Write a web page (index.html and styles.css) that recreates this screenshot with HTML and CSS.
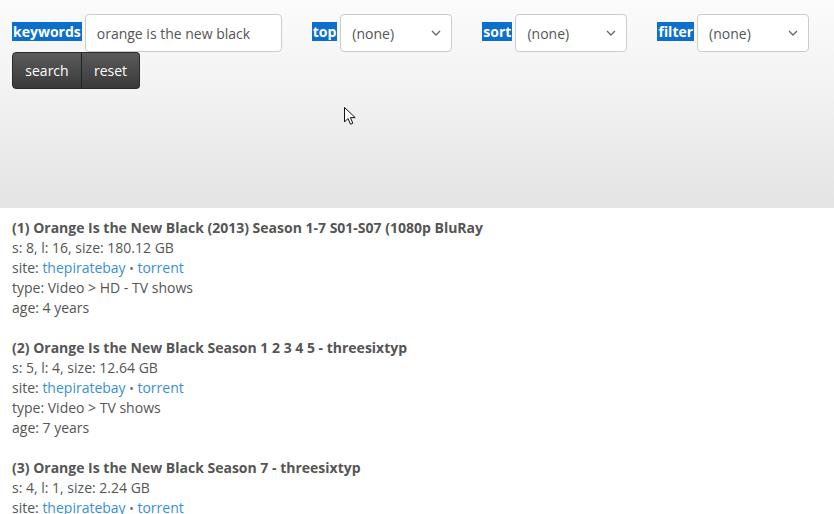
FILE: index.html
```html
<!DOCTYPE html>
<html lang="en">
<head>
<meta charset="utf-8">
<title>search</title>
<link rel="stylesheet" href="styles.css">
</head>
<body>
<form class="search-bar">
  <div class="fields">
    <div class="field">
      <label class="field-label" for="kw">keywords</label>
      <input class="text-input" id="kw" type="text" value="orange is the new black">
    </div>
    <div class="field">
      <label class="field-label" for="top">top</label>
      <select class="select" id="top"><option>(none)</option></select>
    </div>
    <div class="field">
      <label class="field-label" for="sort">sort</label>
      <select class="select" id="sort"><option>(none)</option></select>
    </div>
    <div class="field">
      <label class="field-label" for="filter">filter</label>
      <select class="select" id="filter"><option>(none)</option></select>
    </div>
  </div>
  <div class="btn-group">
    <button class="btn" type="button">search</button>
    <button class="btn" type="button">reset</button>
  </div>
</form>

<svg class="pointer" width="14" height="20" viewBox="0 0 14 20">
  <path d="M1.5 1.5 L1.5 16 L5 12.5 L7.5 18.2 L9.8 17.2 L7.4 11.6 L12.2 11.6 Z" fill="#fff" stroke="#111" stroke-width="1" stroke-linejoin="round"/>
</svg>

<main class="results">
  <article class="result">
    <div class="result-title">(1) Orange Is the New Black (2013) Season 1-7 S01-S07 (1080p BluRay</div>
    <div>s: 8, l: 16, size: 180.12 GB</div>
    <div>site: <a href="#">thepiratebay</a> <span class="dot">•</span> <a href="#">torrent</a></div>
    <div>type: Video &gt; HD - TV shows</div>
    <div>age: 4 years</div>
  </article>
  <article class="result">
    <div class="result-title">(2) Orange Is the New Black Season 1 2 3 4 5 - threesixtyp</div>
    <div>s: 5, l: 4, size: 12.64 GB</div>
    <div>site: <a href="#">thepiratebay</a> <span class="dot">•</span> <a href="#">torrent</a></div>
    <div>type: Video &gt; TV shows</div>
    <div>age: 7 years</div>
  </article>
  <article class="result">
    <div class="result-title">(3) Orange Is the New Black Season 7 - threesixtyp</div>
    <div>s: 4, l: 1, size: 2.24 GB</div>
    <div>site: <a href="#">thepiratebay</a> <span class="dot">•</span> <a href="#">torrent</a></div>
    <div>type: Video &gt; TV shows</div>
    <div>age: 7 years</div>
  </article>
</main>
</body>
</html>
```

FILE: styles.css
```css
html, body {
  margin: 0;
  padding: 0;
  background: #fff;
}

body {
  font-family: "Open Sans", "Liberation Sans", sans-serif;
  font-size: 14px;
  line-height: 20px;
  color: #555;
  position: relative;
  overflow: hidden;
  height: 514px;
}

/* top search panel */
.search-bar {
  box-sizing: border-box;
  height: 208px;
  padding: 14px 12px 0;
  background: linear-gradient(to bottom, #fbfbfb 0%, #f3f3f3 40%, #e4e4e4 100%);
  display: flex;
  flex-direction: column;
  align-items: flex-start;
}

.fields {
  display: flex;
  column-gap: 30px;
}

.field {
  display: flex;
  align-items: center;
  gap: 3px;
}

.field-label {
  background: #0b6fcb;
  color: #fff;
  font-weight: 700;
  font-size: 14px;
  line-height: 19px;
  padding: 0 1px;
  margin-top: -4px;
}

.text-input,
.select {
  box-sizing: border-box;
  height: 38px;
  border: 1px solid #ccc;
  border-radius: 4px;
  background-color: #fff;
  font-family: inherit;
  font-size: 14px;
  color: #555;
  padding: 0 12px 0 11px;
  margin: 0;
  outline: none;
}

.text-input {
  width: 197px;
}

.select {
  width: 112px;
  appearance: none;
  -webkit-appearance: none;
  background-image: url("data:image/svg+xml;utf8,<svg xmlns='http://www.w3.org/2000/svg' width='10' height='6' viewBox='0 0 10 6'><path d='M1 1 L5 5 L9 1' fill='none' stroke='%23666' stroke-width='1.3'/></svg>");
  background-repeat: no-repeat;
  background-position: right 10px center;
}

.btn-group {
  display: flex;
  margin-top: 0;
}

.btn {
  height: 37px;
  margin: 0;
  padding: 0 12px;
  border: 1px solid #2a2a2a;
  background: linear-gradient(to bottom, #5a5a5a, #3a3a3a);
  color: #fff;
  font-family: inherit;
  font-size: 14px;
}

.btn:first-child {
  border-radius: 4px 0 0 4px;
  width: 70px;
}

.btn:last-child {
  border-left-color: #222;
  border-radius: 0 4px 4px 0;
  width: 59px;
  margin-left: -1px;
}

/* mouse pointer drawn above the panel */
.pointer {
  position: absolute;
  left: 343px;
  top: 106px;
}

/* result list */
.results {
  padding: 10px 12px 0;
}

.result {
  margin-bottom: 20px;
}

.result > div {
  height: 20px;
}

.result-title {
  font-weight: 700;
}

.results a {
  color: #3a8fd3;
  text-decoration: none;
}

.dot {
  color: #666;
  font-size: 12px;
  line-height: 0;
}
```
